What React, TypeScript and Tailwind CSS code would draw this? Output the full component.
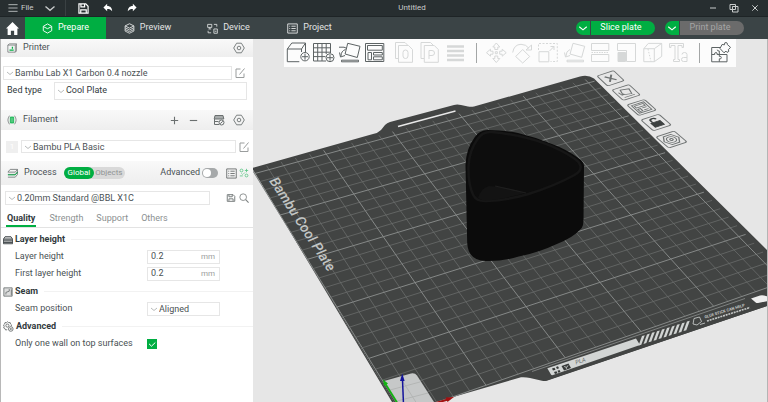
import type { ReactNode } from 'react';
import clsx from 'clsx';

type IconProps = { className?: string; children: ReactNode; box?: string };

function Icon({ className = 'size-3', children, box = '0 0 12 12' }: IconProps) {
  return (
    <svg viewBox={box} className={clsx('shrink-0', className)} fill="none" stroke="currentColor" aria-hidden="true">
      {children}
    </svg>
  );
}

const Chevron = ({ className = 'size-2' }: { className?: string }) => (
  <Icon className={className} box="0 0 8 8">
    <path d="m1 3 3 2.500L7 3" strokeWidth=".9" />
  </Icon>
);

const GearIcon = () => (
  <Icon className="size-3 text-[#7b8080]">
    <path d="M3.600 1.200h4.800L11.300 6 8.400 10.800H3.600L.7 6z" strokeLinejoin="round" />
    <circle cx="6" cy="6" r="1.800" />
  </Icon>
);

const EditIcon = () => (
  <Icon className="size-3 text-[#9a9d9d]">
    <path d="M6.500 2H2v8.500h8V6.500M5.500 7.500 10.500 1.500" />
  </Icon>
);

const navTabs = [
  {
    label: 'Prepare',
    icon: (
      <>
        <path d="m6 1 4.600 2.600v4.800L6 11 1.400 8.400V3.600z" strokeLinejoin="round" />
        <path d="M1.600 4 6 6.200 10.400 4" />
      </>
    ),
  },
  {
    label: 'Preview',
    icon: (
      <>
        <path d="m6 .8 4.800 2.400L6 5.600 1.200 3.200z" strokeLinejoin="round" />
        <path d="M1.200 3.200V8.800L6 11.200l4.800-2.400V3.200M1.200 5.200 6 7.600l4.800-2.400M1.200 7.100 6 9.500l4.800-2.400" strokeWidth=".9" />
      </>
    ),
  },
  {
    label: 'Device',
    icon: (
      <path
        d="M.7 1.500h4.500v3.300H.7zM3 4.800v1.500M1.500 6.500h3M7.500 6.500h3.800v4.700H7.500zM8.500 9h1.800M7.500 1.500h3.200V4M1.200 8.500v2.200h3.300"
        strokeWidth=".9"
      />
    ),
  },
  {
    label: 'Project',
    icon: (
      <>
        <path d="M.8 1h10.400v10H.8z" />
        <path d="M2.500 3.500h1M2.500 6h1M2.500 8.500h1M4.800 3.500h4.700M4.800 6h4.700M4.800 8.500h4.700" />
      </>
    ),
  },
];

function TitleBar() {
  return (
    <header className="grid h-[17px] shrink-0 grid-cols-[1fr_auto_1fr] items-center border-b border-[#1e2426] bg-[#272e30] text-[8px] text-[#c9cccc]">
      <div className="flex h-full items-center">
        <button className="flex items-center gap-[3px] pl-2">
          <Icon className="size-[10px]">
            <path d="M.5 2h11M.5 6h11M.5 10h11" />
          </Icon>
          File
        </button>
        <button aria-label="More menus" className="ml-[10px]">
          <Chevron className="size-3" />
        </button>
        <span className="mr-3 ml-[9px] h-full w-px bg-[#3a4143]" />
        <button aria-label="Save" className="text-white">
          <Icon className="size-[11px]">
            <path d="M1 1h7.500L11 3.500V11H1zM3.200 1.500v2.700h4V1.500M3 10.500V7.500h6v3" strokeWidth="1.300" />
          </Icon>
        </button>
        <button aria-label="Undo" className="ml-[14px] text-white">
          <Icon className="size-[10px]">
            <path d="M5 1v2.500c4 0 6 2.500 6 6.500C9.500 8 8 7.300 5 7.300V10L.5 5.500z" fill="currentColor" stroke="none" />
          </Icon>
        </button>
        <button aria-label="Redo" className="ml-[14px] text-white">
          <Icon className="size-[10px]">
            <path d="M7 1v2.500C3 3.500 1 6 1 10c1.500-2 3-2.700 6-2.700V10l4.500-4.500z" fill="currentColor" stroke="none" />
          </Icon>
        </button>
      </div>
      <h1 className="pl-14">Untitled</h1>
      <div className="flex items-center justify-end gap-3 pr-[9px]">
        <button aria-label="Minimize">
          <Icon className="size-2" box="0 0 8 8">
            <path d="M1 4h6" />
          </Icon>
        </button>
        <button aria-label="Restore">
          <Icon className="size-[10px]" box="0 0 10 10">
            <path d="M1 1.500h5.500V6.500H1zM3.500 3.500H9V9H3.500z" />
          </Icon>
        </button>
        <button aria-label="Close">
          <Icon className="size-2" box="0 0 8 8">
            <path d="m1.300 1.300 5.400 5.400M6.700 1.300 1.300 6.700" />
          </Icon>
        </button>
      </div>
    </header>
  );
}

function NavBar() {
  return (
    <nav className="flex h-[22px] shrink-0 items-center bg-[#3b4446] text-[9px] text-[#e3e5e5]">
      <button aria-label="Home" className="flex w-[25px] justify-center text-white">
        <Icon className="size-[13px]">
          <path d="M6 0 0 6h1.500v6h3V8h3v4h3V6H12z" fill="currentColor" stroke="none" />
        </Icon>
      </button>
      {navTabs.map((tab, index) => (
        <button
          key={tab.label}
          className={clsx('flex h-full w-[81px] items-center justify-center gap-[5px]', index === 0 ? 'bg-[#00ae42] text-white' : 'pl-[2px]')}
        >
          <Icon className="size-[11px]">{tab.icon}</Icon>
          {tab.label}
        </button>
      ))}
      <div className="ml-auto flex gap-[10px] pr-6">
        <div className="flex h-[14px] gap-px">
          <button aria-label="Slice options" className="flex w-[14px] items-center justify-center rounded-l-full bg-[#00ae42] text-white">
            <Chevron className="size-[10px]" />
          </button>
          <button className="w-16 rounded-r-full bg-[#00ae42] pr-1 text-white">Slice plate</button>
        </div>
        <div className="flex h-[14px] gap-px">
          <button aria-label="Print options" className="flex w-[14px] items-center justify-center rounded-l-full bg-[#00ae42] text-white">
            <Chevron className="size-[10px]" />
          </button>
          <button className="w-16 rounded-r-full bg-[#6b6b6b] pr-1 text-[#a5a5a5]">Print plate</button>
        </div>
      </div>
    </nav>
  );
}

type PickerProps = { id: string; label: string; value: string; className?: string };

function Picker({ id, label, value, className }: PickerProps) {
  return (
    <div className={clsx('flex items-center border border-[#e6e6e6] bg-white pl-[2px]', className)}>
      <Chevron className="size-2 text-[#b0b3b3]" />
      <select id={id} aria-label={label} className="h-full min-w-0 flex-1 appearance-none bg-transparent pl-px outline-none">
        <option>{value}</option>
      </select>
    </div>
  );
}

function SectionHeader({ icon, title, className, children }: { icon: ReactNode; title: string; className?: string; children: ReactNode }) {
  return (
    <div className={clsx('flex items-center bg-linear-to-b from-[#f9f9f9] to-[#eeeeee] pr-2 pl-[6px]', className)}>
      {icon}
      <h2 className="pl-[6px]">{title}</h2>
      {children}
    </div>
  );
}

function GroupTitle({ icon, title }: { icon: ReactNode; title: string }) {
  return (
    <h3 className="flex h-[17px] items-center gap-[2px] pl-[2px] font-bold text-[#323a3d]">
      {icon}
      {title}
      <span className="ml-1 h-px flex-1 bg-[#f2f2f2]" />
    </h3>
  );
}

function NumberRow({ id, label, value }: { id: string; label: string; value: string }) {
  return (
    <div className="flex h-[17px] items-center pl-[14px]">
      <label htmlFor={id} className="w-[132px]">{label}</label>
      <div className="flex h-[14px] w-[73px] items-center border border-[#e6e6e6] pr-1 pl-[3px]">
        <input id={id} defaultValue={value} className="min-w-0 flex-1 bg-transparent outline-none" />
        <span className="text-[8px] text-[#9a9d9d]">mm</span>
      </div>
    </div>
  );
}

function Sidebar() {
  return (
    <aside className="w-[253px] shrink-0 border-l border-[#b8b8b8] bg-white text-[9px] text-[#4a5154]">
      <SectionHeader
        title="Printer"
        className="h-[18px]"
        icon={
          <Icon className="size-[10px] text-[#7b8080]">
            <path d="M1 2.500 3 1h8.500v8.500L10 11H1zM1 2.500h9V11M10 2.500 11.500 1" />
            <path d="M3 8.500h5M6.500 4.500v2.500" stroke="#00ae42" strokeWidth="1.500" />
          </Icon>
        }
      >
        <button aria-label="Printer settings" className="ml-auto"><GearIcon /></button>
      </SectionHeader>

      <div className="flex items-center gap-[2px] pt-[9px] pl-[2px]">
        <Picker id="printer" label="Printer preset" value="Bambu Lab X1 Carbon 0.4 nozzle" className="h-[14px] w-[229px]" />
        <button aria-label="Edit printer"><EditIcon /></button>
      </div>
      <div className="flex items-center pt-[2px] pl-[6px] text-[#323a3d]">
        <label htmlFor="bed" className="w-[47px]">Bed type</label>
        <Picker id="bed" label="Bed type" value="Cool Plate" className="h-[18px] w-[193px]" />
      </div>

      <SectionHeader
        title="Filament"
        className="mt-[10px] h-5"
        icon={
          <Icon className="size-[10px] text-[#7b8080]">
            <path d="M3 .8Q-.8 6 3 11.200M9 .8q3.800 5.200 0 10.400" />
            <path d="M4 2.500h4v7H4zM6 2.500v7" stroke="#00ae42" fill="#8fdcab" />
          </Icon>
        }
      >
        <div className="ml-auto flex items-center gap-2 text-[#6b7070]">
          <button aria-label="Add filament">
            <Icon className="size-[11px]"><path d="M6 2v8M2 6h8" strokeWidth="1.200" /></Icon>
          </button>
          <button aria-label="Remove filament">
            <Icon className="size-[11px]"><path d="M2 6h8" strokeWidth="1.200" /></Icon>
          </button>
          <button aria-label="Sync filament" className="ml-[6px]">
            <Icon className="size-3">
              <path d="M2 1.500h8l.8 3.500H1.200z" fill="#a9adad" />
              <path d="M1.500 5v5.500H6M1.500 7.500h4" />
              <circle cx="8.500" cy="8.500" r="2.500" />
              <path d="m7.200 9.700 2.600-2.400" />
            </Icon>
          </button>
          <button aria-label="Filament settings"><GearIcon /></button>
        </div>
      </SectionHeader>

      <div className="flex items-center pt-[10px] pl-[5px]">
        <button className="mr-[3px] size-3 bg-[#efefef] text-[8px] leading-3 text-white">1</button>
        <Picker id="filament" label="Filament preset" value="Bambu PLA Basic" className="h-[13px] w-[215px]" />
        <button aria-label="Edit filament" className="ml-[2px]"><EditIcon /></button>
      </div>

      <SectionHeader
        title="Process"
        className="mt-2 h-6"
        icon={
          <Icon className="size-[11px] text-[#7b8080]">
            <path d="M3.500 1.500h8L9 4.500H1zM1 7h8l2.500-3M1 10h8l2.500-3V1.500" />
            <path d="M1 7.500h8l2.500-3" stroke="#00ae42" />
          </Icon>
        }
      >
        <div className="ml-[7px] flex h-3 items-center rounded-full bg-[#d9d9d9] text-[8px] leading-none">
          <button className="h-full rounded-full bg-[#00ae42] px-[4px] text-white">Global</button>
          <button className="h-full pr-[3px] pl-px text-[#8f9393]">Objects</button>
        </div>
        <label className="ml-auto flex items-center gap-[2px]">
          Advanced
          <input type="checkbox" role="switch" className="peer sr-only" />
          <span className="flex h-[10px] w-4 items-center rounded-full bg-[#a6a9aa] p-px">
            <span className="size-2 rounded-full bg-white" />
          </span>
        </label>
        <button aria-label="Parameter list" className="ml-2 text-[#6b7070]">
          <Icon className="size-[11px]">
            <path d="M.8 1h10.400v10H.8z" />
            <path d="M2.500 3.500h1M2.500 6h1M2.500 8.500h1M4.800 3.500h4.700M4.800 6h4.700M4.800 8.500h4.700" />
          </Icon>
        </button>
        <button aria-label="Compare presets" className="-mr-1 ml-[2px] text-[#5cc585]">
          <Icon className="size-[10px]">
            <circle cx="3" cy="3" r="1.700" />
            <circle cx="9" cy="9" r="1.700" />
            <path d="M7 3h4M9 1v4M1 9.500h3.500M3 6.500 4.500 8M7 5.500 5.500 7" />
          </Icon>
        </button>
      </SectionHeader>

      <div className="flex items-center pt-[6px] pl-1">
        <Picker id="process" label="Process preset" value="0.20mm Standard @BBL X1C" className="h-[14px] w-[205px]" />
        <button aria-label="Save process" className="ml-4 text-[#7b8080]">
          <Icon className="size-[10px]">
            <path d="M1.500 2h7L10.500 4v6h-9zM3.500 2v2.500h4V2M3.500 9.500V7h5v2.500" strokeWidth="1.200" />
          </Icon>
        </button>
        <button aria-label="Search" className="ml-[3px] text-[#7b8080]">
          <Icon className="size-[10px]">
            <circle cx="5" cy="5" r="4" />
            <path d="m8 8 3.500 3.500" strokeWidth="1.300" />
          </Icon>
        </button>
      </div>

      <div role="tablist" className="mt-[7px] flex gap-[13px] border-b border-[#e3e3e3] pl-[5px] text-[#8c9192]">
        <button role="tab" aria-selected="true" className="h-[15px] border-b-2 border-[#00ae42] px-px font-bold text-[#323a3d]">Quality</button>
        <button role="tab" aria-selected="false" className="h-[15px] border-b-2 border-transparent">Strength</button>
        <button role="tab" aria-selected="false" className="h-[15px] border-b-2 border-transparent">Support</button>
        <button role="tab" aria-selected="false" className="h-[15px] border-b-2 border-transparent">Others</button>
      </div>

      <div className="flex flex-col gap-px pt-[3px]">
        <section>
          <GroupTitle
            title="Layer height"
            icon={
              <Icon className="size-[10px]">
                <path d="M2.500 2h7l2 3v5.500H.5V5z" fill="#c9cbcb" />
                <path d="M.5 5h11M.5 7h11M.5 9h11" />
              </Icon>
            }
          />
          <NumberRow id="layer-height" label="Layer height" value="0.2" />
          <NumberRow id="first-layer-height" label="First layer height" value="0.2" />
        </section>
        <section>
          <GroupTitle
            title="Seam"
            icon={
              <Icon className="size-[10px] text-[#6b7070]">
                <path d="M1 1h10v10H1z" fill="#dcdddd" />
                <path d="M3.500 9V6.500l4-1.500V2.500M10 3v7" />
              </Icon>
            }
          />
          <div className="flex h-[17px] items-center pl-[14px]">
            <label htmlFor="seam" className="w-[132px]">Seam position</label>
            <Picker id="seam" label="Seam position" value="Aligned" className="h-[14px] w-[73px]" />
          </div>
        </section>
        <section>
          <GroupTitle
            title="Advanced"
            icon={
              <Icon className="size-[11px] text-[#6b7070]">
                <path d="m5 .8 1.200 1 1.600-.1.400 1.600 1.200 1-.7 1.400M5 .8l-1.200 1-1.600-.1-.4 1.600-1.200 1L1.300 6l-.6 1.500 1.500.8.600 1.500 1.800-.3" />
                <circle cx="4.800" cy="5" r="1.700" />
                <circle cx="8.500" cy="8.700" r="2.500" />
                <circle cx="8.500" cy="8.700" r=".7" />
              </Icon>
            }
          />
          <div className="flex h-[18px] items-center pl-[14px]">
            <label htmlFor="one-wall" className="w-[132px]">Only one wall on top surfaces</label>
            <span className="grid size-[10px]">
              <input id="one-wall" type="checkbox" defaultChecked className="col-start-1 row-start-1 size-[10px] appearance-none bg-[#00ae42]" />
              <Icon className="pointer-events-none col-start-1 row-start-1 size-[10px] text-white" box="0 0 10 10">
                <path d="m2 4.800 2.500 2.400L8.300 3.500" />
              </Icon>
            </span>
          </div>
        </section>
      </div>
    </aside>
  );
}

const sceneTools: { name: string; enabled?: boolean; art: ReactNode }[] = [
  {
    name: 'Add model',
    enabled: true,
    art: (
      <>
        <path d="M17.500 13v-3H3.300v12.700h12M3.300 10l4.500-6H21.500l-4 6M21.500 4v9" />
        <circle cx="21" cy="17.700" r="4.200" />
        <path d="M18 17.700h6M21 14.700v6" />
      </>
    ),
  },
  {
    name: 'Add plate',
    enabled: true,
    art: (
      <>
        <path d="M20.500 14V4.500h-17V22H16M3.500 8.800h17M3.500 13.200h17M3.500 17.600H15.500M7.700 4.500V22M12 4.500V22M16.200 4.500V15" />
        <circle cx="20" cy="18.700" r="4" />
        <path d="M17 18.700h6M20 15.700v6" />
      </>
    ),
  },
  {
    name: 'Auto orient',
    enabled: true,
    art: (
      <path d="m11.700 4.300 12.300 3-2.700 11.200-12.200-3.500zM5.500 21.200h17v1.600h-17zM3 8.200h5l3 1.300M9.500 10.500Q5 12 5 17M3.500 13.500l1 4.500 4.500-1.500" />
    ),
  },
  {
    name: 'Arrange',
    enabled: true,
    art: <path d="M3.500 4.500h18.300v18H3.500zM5.500 6.500h14.800v4.700H5.500zM6 13.500h3.500v7.300H6zM11.500 13.500h8.800V16h-8.800zM11.500 17.800h8.800v3h-8.800z" />,
  },
  {
    name: 'Split to objects',
    art: (
      <>
        <path d="M10 19.500H7.500v-16H17l3 3M10.500 6.500h10l4 4v12.800h-14z" />
        <rect x="15" y="11" width="5" height="8.500" rx="2.500" />
      </>
    ),
  },
  {
    name: 'Split to parts',
    art: <path d="M10 19.500H7v-16h9.500l3 3M10.300 6.500h10l4 4v12.800h-14zM15 20v-8.500h3a2.500 2.500 0 0 1 0 5h-3" />,
  },
  { name: 'Layer height', art: <path d="M7 7.500h17M7 12h17M7 16.500h17M7 21h17" strokeWidth="2.600" /> },
];

const editTools: { name: string; art: ReactNode }[] = [
  {
    name: 'Move',
    art: <path d="m13.300 4 3.500 4h-2v2.500h-3V8h-2zM13.300 23.500l-3.500-4h2V17h3v2.500h2zM3.500 13.700l4-3.500v2H10v3H7.500v2zM23.200 13.700l-4-3.500v2h-2.500v3h2.500v2zM12.300 12.700h2v2h-2z" />,
  },
  { name: 'Rotate', art: <path d="m13.700 10.500 7 7-7 6.500-7-6.500zM3.700 13.500Q5 5.500 12 5.300q5 0 8 4M22.500 6v5H17z" /> },
  {
    name: 'Scale',
    art: (
      <>
        <path d="M3.500 11V4.500h18.800v18H15.500" strokeDasharray="2 1.500" />
        <path d="M4 12.700h9.800v10.100H4zM14.500 12l4.500-4.500M15.500 7.500H19V11" />
      </>
    ),
  },
  { name: 'Lay on face', art: <path d="m12 4.300 11.700 3-3 11-11.700-3.300zM6 21.200h16.500v1.600H6zM9 10.500q-4 1.500-4 6.500M3.500 13.500l1 4.500 4.500-1.500" /> },
  {
    name: 'Cut',
    art: (
      <>
        <path d="M4.500 11.500v-7h17.300v7zM4.500 15.500v7h17.300v-7z" />
        <path d="M4.500 13.500h17.300" strokeDasharray="1.500 1" />
      </>
    ),
  },
  {
    name: 'Supports',
    art: (
      <>
        <path d="M4.500 11.500v-7h18v18H13.500v-11z" />
        <path d="M5 13.500h7.500v9H5z" fill="currentColor" />
      </>
    ),
  },
  {
    name: 'Seam painting',
    art: (
      <>
        <path d="M4.800 9.700h10.500v13H4.800zM4.800 9.700l4.500-5.300H22.700l-7.400 5.300M22.700 4.400v13l-7.400 5.300" />
        <path d="m9 10 3 12.500" strokeDasharray="1.500 1.500" />
      </>
    ),
  },
  {
    name: 'Text shape',
    art: (
      <>
        <path d="M4.500 4.500h14v4h-1.500V6.500H13v14h1.500v2h-6v-2H10v-14H6v2H4.500z" />
        <path d="M17 15.500q0-2 2.500-2t2.500 2V22.500h-3.500q-2 0-2-2t2-2H22" />
      </>
    ),
  },
];

function ToolButton({ name, enabled, art }: { name: string; enabled?: boolean; art: ReactNode }) {
  return (
    <button aria-label={name} disabled={!enabled} className={enabled ? 'text-[#5d6364]' : 'text-[#d6d8d8]'}>
      <Icon className="h-7 w-[26px]" box="0 0 26 28">{art}</Icon>
    </button>
  );
}

function SceneToolbar() {
  return (
    <div className="relative mx-auto flex h-7 w-fit items-center bg-[#fcfcfc] pr-[2px]">
      {sceneTools.map((tool) => (
        <ToolButton key={tool.name} {...tool} />
      ))}
      <span className="mr-[6px] ml-[10px] h-5 w-px bg-[#a3a6a6]" />
      {editTools.map((tool) => (
        <ToolButton key={tool.name} {...tool} />
      ))}
      <span className="mx-2 h-5 w-px bg-[#a3a6a6]" />
      <ToolButton
        name="Assembly view"
        enabled
        art={
          <path d="M12 8.500H3.700v14.300H19V15.500M3.700 15.500h3q-.5-2 1.200-2t1.200 2H19M11.300 22.800v-3q2 .5 2-1.200t-2-1.200v-2M11.300 15.500V12q-2 .3-2-1.300M14 5.500l2.500.3q-.3-2.600 1.500-2.300t1.300 2l3.200 2.800-2.200 2.500q1.200 1.500-.2 2.300t-2.100-1l-2 1.700-4-4.300z" />
        }
      />
    </div>
  );
}

// Perspective of the build plate. One unit is 50 mm, the origin is the front left corner.
function project(u: number, v: number) {
  const s = (u - 1) / 3;
  const t = v / 3;
  const w = 1 + 0.0663 * s + 0.12 * t;
  const x = (486 + 275 * s - 56.7 * t) / w;
  const y = (385.3 - 58.7 * s - 120.2 * t) / w;
  return `${x.toFixed(1)} ${y.toFixed(1)}`;
}

function gridPath(major: boolean) {
  const parts: string[] = [];
  for (let i = 0; i <= 25; i++) {
    if ((i % 5 === 0) !== major) continue;
    const k = i / 5;
    parts.push(`M${project(k, 0)}L${project(k, 5.1)}M${project(0, k)}L${project(5.1, k)}`);
  }
  return parts.join('');
}

const plateActions: { at: string; art: ReactNode }[] = [
  { at: 'matrix(.83 -.27 .53 .5 597 76)', art: <path d="m6 5 8 10M14 5 6 15" strokeWidth="2" /> },
  { at: 'matrix(.85 -.27 .56 .52 612 90)', art: <path d="m7 4 9 2-2 8-9-2zM4 16.500h12M3 7l1 5 3-1" /> },
  { at: 'matrix(.87 -.28 .59 .53 627 105)', art: <path d="M3 3h14v14H3zM5 5h10v3.500H5zM5 11h3v4H5zM10 11h5M10 14.500h5" /> },
  {
    at: 'matrix(.89 -.29 .62 .54 641 120)',
    art: (
      <>
        <path d="M5 9h10v7H5z" fill="#3d4141" stroke="#3d4141" />
        <path d="M7 9V6q0-3 3-3t3 2.500" stroke="#3d4141" strokeWidth="1.800" />
      </>
    ),
  },
  {
    at: 'matrix(.91 -.3 .64 .55 656 137)',
    art: (
      <>
        <path d="M6 3h8l4 7-4 7H6l-4-7z" />
        <circle cx="10" cy="10" r="4.500" />
        <circle cx="10" cy="10" r="1.500" />
      </>
    ),
  },
];

const hatches = [0, 1, 2, 3, 4, 5, 6, 7, 8, 9];

function BuildPlate() {
  return (
    <svg viewBox="253 39 515 363" preserveAspectRatio="xMinYMin slice" className="absolute inset-0 size-full" role="img" aria-label="Build plate with model">
      <path
        d="M252 168 373 134q5-1 8-4l4-5q2-2 5-3l64-17q3-1 7 0l7 1.500q3 .5 6 0L580 76.500q8-2 14 2L770 253v52L549 380q-3 1.300-7 .7l-12-2.700q-4-1-9-.7L436 402l-20 10h-18z"
        fill="#424443"
      />
      <path d={gridPath(false)} fill="none" stroke="#696c6b" strokeWidth=".8" />
      <path d={gridPath(true)} fill="none" stroke="#858887" strokeWidth="1" />
      <path d="m398 126.500 57.500-15.500" stroke="#e8e8e8" strokeWidth="1.300" />
      <path d="M254 172 400 412" stroke="#7b7e7d" strokeWidth=".8" strokeDasharray="1 1" />

      <text transform="translate(269 181) rotate(57)" fill="#c3c6c5" fontSize="14" fontStyle="italic" fontWeight="500" className="font-[Roboto,sans-serif]">
        Bambu Cool Plate
      </text>

      {/* front label strip */}
      <path d="M770 301 752 297 531 373l14 8 225-76z" fill="#424443" />
      <path d="M532 371.500 745 298.500" stroke="#7d807f" />
      <path d="M547.300 368.300 636 338.500l4 6.500-87 30q-1.500.5-2.200-.8z" fill="#d2d5d4" />
      <path d="m552 368.500 2.500-.8 1 2-2.500.8zM556 367l2-.7 1 2-2 .8zM554 372l2.500-.8 1 2-2.500.8zM557.500 370.800l2-.7 1 2-2 .7z" fill="#363938" />
      <path d="m561.500 366 7-2.400 2.500 4.500-7 2.500z" fill="#363938" />
      <path d="m564 366.500 3 .8 1-2M566 367l.5 2" fill="none" stroke="#d2d5d4" strokeWidth=".7" />
      <text transform="translate(576 364.500) rotate(-18)" fill="#6b6e6d" fontSize="6" fontStyle="italic" className="font-[Roboto,sans-serif]">
        PLA
      </text>
      {hatches.map((i) => (
        <path key={i} d="m638.500 345.500 3.500-9.500 2.800-.8-3.500 9.500z" fill="#d2d5d4" transform={`translate(${i * 5} ${i * -1.6})`} />
      ))}
      <path d="m694 318.500 5.500-1.500 2 4.500-4.500 3.500-4-1zM700 324.500l5-1.500" fill="none" stroke="#d2d5d4" strokeWidth=".8" />
      <text transform="translate(705 318.500) rotate(-17)" fill="#c3c6c5" fontSize="4" fontWeight="700" className="font-[Roboto,sans-serif]">
        GLUE STICK CAN HELP
      </text>
      <path d="m707 321 43-13.500" stroke="#c3c6c5" strokeWidth="1.600" strokeDasharray="2 .8" />
      <path d="m751 298.500 9-3q2-.7 4 0l6 1.500v3.500L758 303q-1.500.4-2.300-.6z" fill="#eeeeee" />

      {/* origin corner and axes */}
      <path d="m384 381 27-7.500q4-.8 6 2L434 402l-12 6h-22z" fill="#c6c8c8" />
      <path d="m400 377 19 30M390 390l30-8M397 401l31-8" fill="none" stroke="#aeb1b0" strokeWidth=".8" />
      <path d="m398 404-12.500-20" stroke="#12b312" strokeWidth="1.800" />
      <path d="m383 379.500 5 4-3.800 2.500z" fill="#12b312" />
      <path d="M403.500 404 402.500 380" stroke="#14149c" strokeWidth="1.500" />
      <path d="m402.300 373.500 2.300 7.500h-4.600z" fill="#14149c" />
      <path d="m436 403 12-3.500" stroke="#a31111" strokeWidth="2" />
      <path d="m445.500 397.500 8.500-.5-6.500 5z" fill="#a31111" />

      {/* printed model */}
      <path
        d="M488 130q-9 0-13.500 7.500-8.500 11.500-9 27.500l1.700 78q1 17.500 18.500 18 17 .5 33-4.500 20-4 37-12 18-7 26-16.500 1.800-3 1.800-8l.5-54q-.3-4.500-5-7.500-12-9-27-14.500-17-7-34-11-14-3-30-3z"
        fill="#0b0b0b"
      />
      <path d="M492 132q-9-1-14 6.500-9 12-9.500 28-.5 18 5 29 3 6 13 5.500 22-1 42-7 26-8 46-19 7-4 6-9-1-4-5.500-7-32-22-83-27z" fill="#0d0d0d" stroke="#161616" strokeWidth="2.500" />
      <path d="M478 198q3-10 11-12 20 1 36 7-16 5-37 7.500-6 .5-10-2.500z" fill="#131313" />
      <path d="m495 186 31 7" stroke="#1e1e1e" strokeWidth="1.200" />

      {plateActions.map((action) => (
        <g key={action.at} transform={action.at} fill="none" stroke="#6e7272" strokeWidth="1.200">
          <rect width="20" height="20" rx="2" />
          {action.art}
        </g>
      ))}
    </svg>
  );
}

export default function App() {
  return (
    <div className="flex min-h-screen flex-col bg-[#e6e6e6] font-[Roboto,sans-serif]">
      <TitleBar />
      <NavBar />
      <div className="flex flex-1">
        <Sidebar />
        <main className="relative min-w-0 flex-1 overflow-hidden border-r border-[#b4b4b4]">
          <BuildPlate />
          <SceneToolbar />
        </main>
      </div>
    </div>
  );
}
